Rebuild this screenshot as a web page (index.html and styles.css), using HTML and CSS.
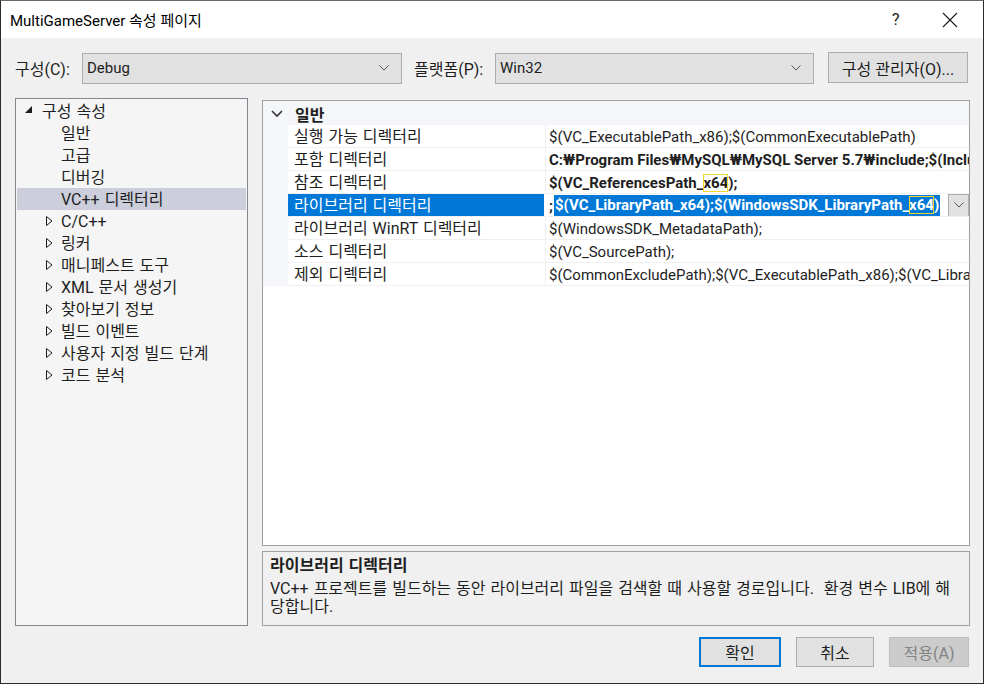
FILE: index.html
```html
<!DOCTYPE html>
<html lang="ko">
<head>
<meta charset="utf-8">
<title>MultiGameServer 속성 페이지</title>
<link rel="stylesheet" href="styles.css">
</head>
<body>
<div class="window">
  <div class="titlebar">
    <span class="title">MultiGameServer 속성 페이지</span>
    <span class="help">?</span>
    <span class="close"><svg width="16" height="16" viewBox="0 0 16 16"><path d="M1 1 L15 15 M15 1 L1 15" stroke="#1a1a1a" stroke-width="1.1" fill="none"/></svg></span>
  </div>

  <div class="toolbar">
    <span class="label ko">구성(C):</span>
    <div class="combo combo-config"><span>Debug</span><svg class="chev" width="10" height="6" viewBox="0 0 10 6"><path d="M0.5 0.5 L5 5 L9.5 0.5" stroke="#555" fill="none"/></svg></div>
    <span class="label label-plat ko">플랫폼(P):</span>
    <div class="combo combo-plat"><span>Win32</span><svg class="chev" width="10" height="6" viewBox="0 0 10 6"><path d="M0.5 0.5 L5 5 L9.5 0.5" stroke="#555" fill="none"/></svg></div>
    <button class="btn btn-manager">구성 관리자(O)...</button>
  </div>

  <div class="main">
    <div class="tree ko">
      <div class="node root"><svg class="exp-open" width="8" height="8" viewBox="0 0 8 8"><path d="M7 0 L7 7 L0 7 Z" fill="#1e1e1e"/></svg><span>구성 속성</span></div>
      <div class="node leaf"><span>일반</span></div>
      <div class="node leaf"><span>고급</span></div>
      <div class="node leaf"><span>디버깅</span></div>
      <div class="node leaf selected"><span>VC++ 디렉터리</span></div>
      <div class="node child"><svg class="exp" width="7" height="10" viewBox="0 0 7 10"><path d="M0.5 0.5 L6 5 L0.5 9.5 Z" stroke="#1e1e1e" fill="none"/></svg><span>C/C++</span></div>
      <div class="node child"><svg class="exp" width="7" height="10" viewBox="0 0 7 10"><path d="M0.5 0.5 L6 5 L0.5 9.5 Z" stroke="#1e1e1e" fill="none"/></svg><span>링커</span></div>
      <div class="node child"><svg class="exp" width="7" height="10" viewBox="0 0 7 10"><path d="M0.5 0.5 L6 5 L0.5 9.5 Z" stroke="#1e1e1e" fill="none"/></svg><span>매니페스트 도구</span></div>
      <div class="node child"><svg class="exp" width="7" height="10" viewBox="0 0 7 10"><path d="M0.5 0.5 L6 5 L0.5 9.5 Z" stroke="#1e1e1e" fill="none"/></svg><span>XML 문서 생성기</span></div>
      <div class="node child"><svg class="exp" width="7" height="10" viewBox="0 0 7 10"><path d="M0.5 0.5 L6 5 L0.5 9.5 Z" stroke="#1e1e1e" fill="none"/></svg><span>찾아보기 정보</span></div>
      <div class="node child"><svg class="exp" width="7" height="10" viewBox="0 0 7 10"><path d="M0.5 0.5 L6 5 L0.5 9.5 Z" stroke="#1e1e1e" fill="none"/></svg><span>빌드 이벤트</span></div>
      <div class="node child"><svg class="exp" width="7" height="10" viewBox="0 0 7 10"><path d="M0.5 0.5 L6 5 L0.5 9.5 Z" stroke="#1e1e1e" fill="none"/></svg><span>사용자 지정 빌드 단계</span></div>
      <div class="node child"><svg class="exp" width="7" height="10" viewBox="0 0 7 10"><path d="M0.5 0.5 L6 5 L0.5 9.5 Z" stroke="#1e1e1e" fill="none"/></svg><span>코드 분석</span></div>
    </div>

    <div class="right">
      <div class="grid">
        <div class="cat-row">
          <svg class="cat-chev" width="12" height="8" viewBox="0 0 12 8"><path d="M1 1 L6 6 L11 1" stroke="#333" stroke-width="1.6" fill="none"/></svg>
          <span class="cat-name ko">일반</span>
        </div>
        <div class="prop-row">
          <div class="margin"></div><div class="name ko">실행 가능 디렉터리</div><div class="value">$(VC_ExecutablePath_x86);$(CommonExecutablePath)</div>
        </div>
        <div class="prop-row">
          <div class="margin"></div><div class="name ko">포함 디렉터리</div><div class="value bold">C:₩Program Files₩MySQL₩MySQL Server 5.7₩include;$(IncludePath)</div>
        </div>
        <div class="prop-row">
          <div class="margin"></div><div class="name ko">참조 디렉터리</div><div class="value bold">$(VC_ReferencesPath_<span class="find">x64</span>);</div>
        </div>
        <div class="prop-row active">
          <div class="margin"></div><div class="name ko">라이브러리 디렉터리</div>
          <div class="value edit bold"><span class="edit-text"><span class="pre">;</span><span class="sel">$(VC_LibraryPath_x64);$(WindowsSDK_LibraryPath_<span class="find">x64</span>)</span></span><span class="drop"><svg width="10" height="6" viewBox="0 0 10 6"><path d="M0.5 0.5 L5 5 L9.5 0.5" stroke="#555" fill="none"/></svg></span></div>
        </div>
        <div class="prop-row">
          <div class="margin"></div><div class="name ko">라이브러리 WinRT 디렉터리</div><div class="value">$(WindowsSDK_MetadataPath);</div>
        </div>
        <div class="prop-row">
          <div class="margin"></div><div class="name ko">소스 디렉터리</div><div class="value">$(VC_SourcePath);</div>
        </div>
        <div class="prop-row">
          <div class="margin"></div><div class="name ko">제외 디렉터리</div><div class="value">$(CommonExcludePath);$(VC_ExecutablePath_x86);$(VC_LibraryPath_x86)</div>
        </div>
      </div>
      <div class="desc ko">
        <div class="desc-title">라이브러리 디렉터리</div>
        <div class="desc-text">VC++ 프로젝트를 빌드하는 동안 라이브러리 파일을 검색할 때 사용할 경로입니다.&nbsp; 환경 변수 LIB에 해<br>당합니다.</div>
      </div>
    </div>
  </div>

  <div class="buttons">
    <button class="btn btn-ok">확인</button>
    <button class="btn btn-cancel">취소</button>
    <button class="btn btn-apply" disabled>적용(A)</button>
  </div>
</div>
</body>
</html>
```

FILE: styles.css
```css
* { box-sizing: border-box; }

html, body {
  margin: 0;
  padding: 0;
  width: 984px;
  height: 684px;
  overflow: hidden;
  background: #f0f0f0;
}

body {
  font-family: Roboto, "Noto Sans CJK KR", sans-serif;
  font-size: 15px;
  color: #1e1e1e;
}

.ko {
  font-size: 16px;
  word-spacing: 1px;
}

.window {
  width: 984px;
  height: 684px;
  border: 1px solid #2b2b2b;
  border-top-color: #6a6a6a;
  background: #f0f0f0;
  display: flex;
  flex-direction: column;
}

.titlebar {
  height: 37px;
  background: #ffffff;
  display: flex;
  align-items: center;
  padding-left: 9px;
  flex-shrink: 0;
}

.title {
  font-size: 15px;
  color: #000;
  flex: 1;
}

.help {
  font-size: 16px;
  color: #1a1a1a;
  width: 20px;
  margin-right: 30px;
}

.close {
  width: 16px;
  height: 16px;
  margin-right: 25px;
  display: flex;
}

.toolbar {
  display: flex;
  align-items: center;
  height: 32px;
  margin-top: 14px;
  padding-left: 14px;
  flex-shrink: 0;
}

.label {
  width: 67px;
  white-space: nowrap;
}

.label-plat {
  width: 81px;
  margin-left: 12px;
}

.combo {
  height: 31px;
  background: #e1e1e1;
  border: 1px solid #adadad;
  display: flex;
  align-items: center;
  justify-content: space-between;
  padding: 0 12px 0 4px;
}

.combo-config { width: 320px; }
.combo-plat { width: 319px; }

.chev { display: block; }

.btn {
  font-family: Roboto, "Noto Sans CJK KR", sans-serif;
  font-size: 16px;
  color: #1e1e1e;
  background: #e1e1e1;
  border: 1px solid #adadad;
  padding: 0;
  height: 30px;
}

.btn-manager {
  width: 140px;
  margin-left: 14px;
  height: 31px;
  align-self: flex-start;
}

.main {
  display: flex;
  margin-top: 14px;
  padding-left: 14px;
  gap: 14px;
  height: 528px;
  flex-shrink: 0;
}

.tree {
  width: 233px;
  height: 528px;
  border: 1px solid #828790;
  background: #f5f5f5;
  padding: 1px 1px 0;
}

.node {
  height: 22px;
  line-height: 23px;
  display: flex;
  align-items: center;
  white-space: nowrap;
}

.node.root { padding-left: 8px; }
.node.root .exp-open { margin-right: 9px; margin-top: -2px; }
.node.leaf { padding-left: 44px; }
.node.child { padding-left: 29px; }
.node.child .exp { margin-right: 8px; }
.node.selected { background: #cccedb; }

.right {
  width: 708px;
  display: flex;
  flex-direction: column;
  padding-top: 2px;
}

.grid {
  height: 446px;
  border: 1px solid #a0a0a0;
  background: #ffffff;
  overflow: hidden;
}

.cat-row {
  height: 24px;
  background: #f4f6f9;
  display: flex;
  align-items: center;
  padding-left: 8px;
  padding-top: 1px;
}

.cat-chev { margin-right: 12px; }

.cat-name { font-weight: bold; }

.prop-row {
  display: grid;
  grid-template-columns: 25px 258px 1fr;
  height: 23px;
}

.prop-row .margin { background: #f4f6f9; }

.prop-row .name {
  padding-left: 6px;
  line-height: 24px;
  border-bottom: 1px solid #f0f0f0;
  border-right: 1px solid #f0f0f0;
  white-space: nowrap;
  overflow: hidden;
}

.prop-row .value {
  padding-left: 3px;
  line-height: 24px;
  border-bottom: 1px solid #f0f0f0;
  white-space: nowrap;
  overflow: hidden;
  min-width: 0;
}

.bold { font-weight: bold; }

.prop-row.active .name {
  background: #0078d7;
  color: #ffffff;
  border-right: 2px solid #ffffff;
}

.value.edit {
  display: flex;
  align-items: center;
  padding-right: 0;
}

.edit-text {
  flex: 1;
  min-width: 0;
  overflow: hidden;
  white-space: nowrap;
  display: flex;
  align-items: center;
  padding-top: 1px;
}

.value.edit .sel {
  background: #0078d7;
  color: #ffffff;
  line-height: 21px;
  height: 21px;
  padding: 0 1px 0 1px;
  margin-left: 1px;
}

.find {
  outline: 1px solid #f2d728;
  outline-offset: -1px;
}

.drop {
  width: 21px;
  height: 23px;
  background: #e1e1e1;
  border: 1px solid #adadad;
  display: flex;
  align-items: center;
  justify-content: center;
  flex-shrink: 0;
}

.desc {
  margin-top: 5px;
  height: 75px;
  border: 1px solid #a0a0a0;
  background: #f0f0f0;
  padding: 4px 7px 0;
}

.desc-title {
  font-weight: bold;
  line-height: 20px;
  margin-bottom: 4px;
}

.desc-text {
  line-height: 18px;
  white-space: nowrap;
}

.buttons {
  display: flex;
  justify-content: flex-end;
  gap: 15px;
  margin-top: 11px;
  padding-right: 14px;
}

.btn-ok {
  width: 82px;
  border: 2px solid #0078d7;
}

.btn-cancel { width: 78px; }

.btn-apply {
  width: 80px;
  background: #cccccc;
  border-color: #bfbfbf;
  color: #838383;
}
```
